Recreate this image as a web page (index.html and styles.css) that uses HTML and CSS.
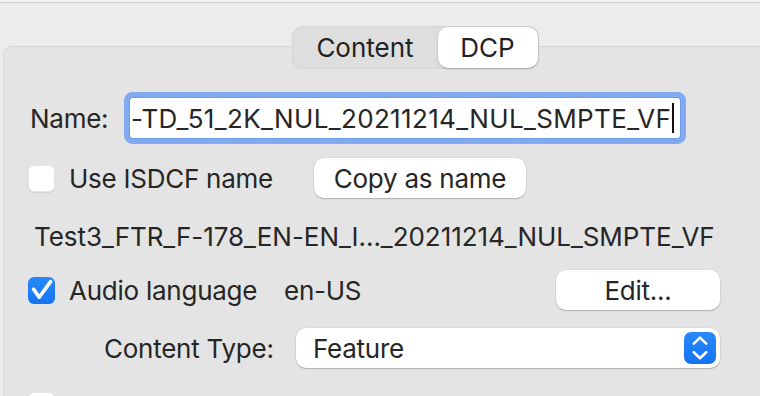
FILE: index.html
```html
<!DOCTYPE html>
<html lang="en">
<head>
<meta charset="utf-8">
<title>DCP settings</title>
<link rel="stylesheet" href="styles.css">
</head>
<body>
<div class="window">
  <div class="topedge"></div>
  <div class="tabs">
    <div class="segmented">
      <div class="seg seg-content">Content</div>
      <div class="seg seg-dcp is-selected">DCP</div>
    </div>
  </div>
  <div class="panel">
    <div class="row row-name">
      <span class="label name-label">Name:</span>
      <div class="textfield"><span class="tf-text">-TD_51_2K_NUL_20211214_NUL_SMPTE_VF</span><span class="caret"></span></div>
    </div>
    <div class="row row-isdcf">
      <span class="checkbox"></span>
      <span class="label check-label isdcf-label">Use ISDCF name</span>
      <button class="button copy-button">Copy as name</button>
    </div>
    <div class="row row-display">
      <span class="label display-name">Test3_FTR_F-178_EN-EN_I..._20211214_NUL_SMPTE_VF</span>
    </div>
    <div class="row row-audio">
      <span class="checkbox is-checked"><svg viewBox="0 0 27 27" width="27" height="27"><path d="M5.6 12.2 L11.2 20.2 L22.6 4.6" fill="none" stroke="#fff" stroke-width="3.6" stroke-linecap="round" stroke-linejoin="round"/></svg></span>
      <span class="label check-label audio-label">Audio language</span>
      <span class="label lang-value">en-US</span>
      <button class="button edit-button">Edit...</button>
    </div>
    <div class="row row-ctype">
      <span class="label ctype-label">Content Type:</span>
      <div class="popup">
        <span class="popup-text">Feature</span>
        <span class="stepper"><svg viewBox="0 0 32 32" width="32" height="32"><path d="M9.8 11.6 L16 5.6 L22.2 11.6 M9.8 20.2 L16 26.2 L22.2 20.2" fill="none" stroke="#fff" stroke-width="2.6" stroke-linecap="round" stroke-linejoin="round"/></svg></span>
      </div>
    </div>
    <div class="row row-enc">
      <span class="checkbox"></span>
      <span class="label check-label">Encrypted</span>
    </div>
  </div>
</div>
</body>
</html>
```
FILE: styles.css
```css
html, body {
  margin: 0;
  padding: 0;
}
body {
  width: 760px;
  height: 396px;
  overflow: hidden;
  background: #ececec;
  font-family: Inter, "Noto Sans", "Liberation Sans", sans-serif;
  font-size: 26px;
  letter-spacing: -0.25px;
  color: #262626;
}
.window {
  width: 827px;
  padding-left: 3px;
  box-sizing: border-box;
}
.topedge {
  height: 2px;
  margin-left: -3px;
  background: #f2f2f2;
  border-bottom: 1px solid #cdcdcd;
}
.tabs {
  padding-top: 23px;
  display: flex;
  justify-content: center;
  position: relative;
  z-index: 1;
}
.segmented {
  display: flex;
  padding: 1px;
  height: 41px;
  border-radius: 11px;
  background: #dedede;
  box-shadow: inset 0 0 0 1px rgba(0,0,0,0.045);
}
.seg {
  display: flex;
  align-items: center;
  justify-content: center;
  height: 41px;
  border-radius: 10px;
  color: #222;
  letter-spacing: 0;
}
.seg-content { width: 145px; }
.seg-dcp { width: 100px; }
.seg.is-selected {
  background: #fff;
  box-shadow: 0 1px 2px rgba(0,0,0,0.22), 0 0 0 0.5px rgba(0,0,0,0.06);
}
.panel {
  margin-top: -23px;
  height: 420px;
  border: 1px solid #d6d6d6;
  border-radius: 9px;
  background: #e4e4e4;
}
.row {
  display: flex;
  align-items: center;
  height: 40px;
}
.row-name { margin-top: 51px; }
.row-isdcf { margin-top: 20px; }
.row-display { margin-top: 18px; }
.row-audio { margin-top: 14px; }
.row-ctype { margin-top: 18px; }
.row-enc { margin-top: 17px; }

.label {
  white-space: nowrap;
}
.name-label {
  margin-left: 26px;
  width: 100px;
}
.textfield {
  width: 550px;
  height: 40px;
  background: #fff;
  border-radius: 3px;
  box-shadow: 0 0 0 1px #6f9be8, 0 0 0 6px #82aaf0;
  display: flex;
  align-items: center;
  overflow: hidden;
}
.tf-text {
  padding-left: 1px;
  white-space: nowrap;
  letter-spacing: 0.35px;
}
.caret {
  display: inline-block;
  width: 2px;
  height: 30px;
  background: #111;
  margin-left: 1px;
}
.checkbox {
  margin-left: 24px;
  width: 27px;
  height: 27px;
  border-radius: 6px;
  background: #fff;
  box-shadow: inset 0 0 0 1px rgba(0,0,0,0.1), 0 1px 1px rgba(0,0,0,0.08);
  flex: none;
}
.checkbox.is-checked {
  background: linear-gradient(#2a89f8, #1474f4);
  box-shadow: none;
}
.checkbox svg { display: block; }
.check-label {
  margin-left: 14px;
}
.isdcf-label { width: 245px; }
.audio-label { width: 215px; }
.lang-value { width: 272px; }
.button {
  font: inherit;
  letter-spacing: inherit;
  color: #262626;
  border: none;
  background: #fff;
  border-radius: 10px;
  height: 40px;
  padding: 0;
  box-shadow: 0 1px 1.5px rgba(0,0,0,0.22), 0 0 0 0.5px rgba(0,0,0,0.06);
}
.copy-button { width: 212px; }
.edit-button { width: 164px; }
.display-name {
  margin-left: 30px;
  letter-spacing: -0.05px;
}
.ctype-label {
  margin-left: 100px;
  width: 192px;
}
.popup {
  width: 424px;
  height: 40px;
  background: #fff;
  border-radius: 10px;
  box-shadow: 0 1px 1.5px rgba(0,0,0,0.22), 0 0 0 0.5px rgba(0,0,0,0.06);
  display: flex;
  align-items: center;
}
.popup-text {
  padding-left: 17px;
}
.stepper {
  margin-left: auto;
  margin-right: 4px;
  width: 32px;
  height: 32px;
  border-radius: 7px;
  background: linear-gradient(#2a89f8, #1373f4);
}
.stepper svg { display: block; }
```
